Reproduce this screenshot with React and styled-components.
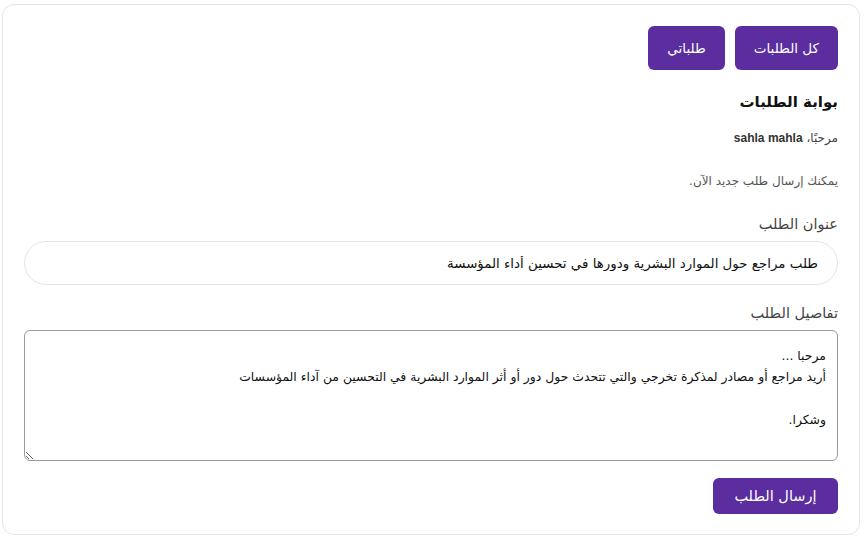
import React from "react";
import styled, { createGlobalStyle } from "styled-components";

const Global = createGlobalStyle`
  html, body { margin: 0; padding: 0; background: #fff; }
  body { font-family: "DejaVu Sans", "Noto Sans", sans-serif; }
  * { box-sizing: border-box; }
`;

const Page = styled.div`
  padding: 4px 5px 4px 2px;
`;

const Card = styled.div`
  direction: rtl;
  height: 531px;
  border: 1px solid #e4e4ef;
  border-radius: 12px;
  padding: 21px 21px 20px 21px;
  display: flex;
  flex-direction: column;
`;

const Toolbar = styled.div`
  display: flex;
  gap: 10px;
`;

const Button = styled.button`
  font-family: "DejaVu Sans", sans-serif;
  background: #5b2d9f;
  color: #fff;
  border: none;
  border-radius: 6px;
  height: ${(p) => (p.$small ? "36px" : "44px")};
  padding: 0 ${(p) => (p.$small ? "21.5px" : "19px")};
  font-size: ${(p) => (p.$small ? "14.5px" : "13.5px")};
  letter-spacing: ${(p) => (p.$small ? "1.5px" : "0")};
  cursor: pointer;
`;

const Title = styled.h2`
  margin: 23px 0 0;
  font-size: 15px;
  font-weight: bold;
  color: #111;
`;

const Greeting = styled.p`
  margin: 20px 0 0;
  font-size: 12px;
  color: #444;
  b { font-family: "Liberation Sans", sans-serif; font-weight: bold; color: #333; }
`;

const Note = styled.p`
  margin: 29px 0 0;
  font-size: 12px;
  color: #555;
`;

const Label = styled.label`
  display: block;
  margin-top: ${(p) => p.$top}px;
  font-size: 14.5px;
  color: #444;
`;

const Input = styled.input`
  direction: rtl;
  margin-top: 9px;
  width: 100%;
  height: 44px;
  border: 1px solid #e2e4ec;
  border-radius: 22px;
  padding: 0 19px;
  font-family: "DejaVu Sans", sans-serif;
  font-size: 13.4px;
  color: #111;
  outline: none;
`;

const TextArea = styled.textarea`
  direction: rtl;
  margin-top: 9px;
  width: 100%;
  height: 131px;
  border: 1px solid #9a9a9a;
  border-radius: 6px;
  padding: 14px 11px 11px;
  font-family: "DejaVu Sans", sans-serif;
  font-size: 12.4px;
  line-height: 21.3px;
  color: #111;
  resize: vertical;
  outline: none;
`;

const Footer = styled.div`
  margin-top: 17px;
  display: flex;
`;

export default function App() {
  return (
    <>
      <Global />
      <Page>
        <Card>
          <Toolbar>
            <Button>كل الطلبات</Button>
            <Button>طلباتي</Button>
          </Toolbar>
          <Title>بوابة الطلبات</Title>
          <Greeting>
            مرحبًا، <b>sahla mahla</b>
          </Greeting>
          <Note>يمكنك إرسال طلب جديد الآن.</Note>
          <Label $top={28}>عنوان الطلب</Label>
          <Input defaultValue="طلب مراجع حول الموارد البشرية ودورها في تحسين أداء المؤسسة" />
          <Label $top={20}>تفاصيل الطلب</Label>
          <TextArea
            defaultValue={
              "مرحبا ...\nأريد مراجع أو مصادر لمذكرة تخرجي والتي تتحدث حول دور أو أثر الموارد البشرية في التحسين من آداء المؤسسات\n\nوشكرا."
            }
          />
          <Footer>
            <Button $small>إرسال الطلب</Button>
          </Footer>
        </Card>
      </Page>
    </>
  );
}
